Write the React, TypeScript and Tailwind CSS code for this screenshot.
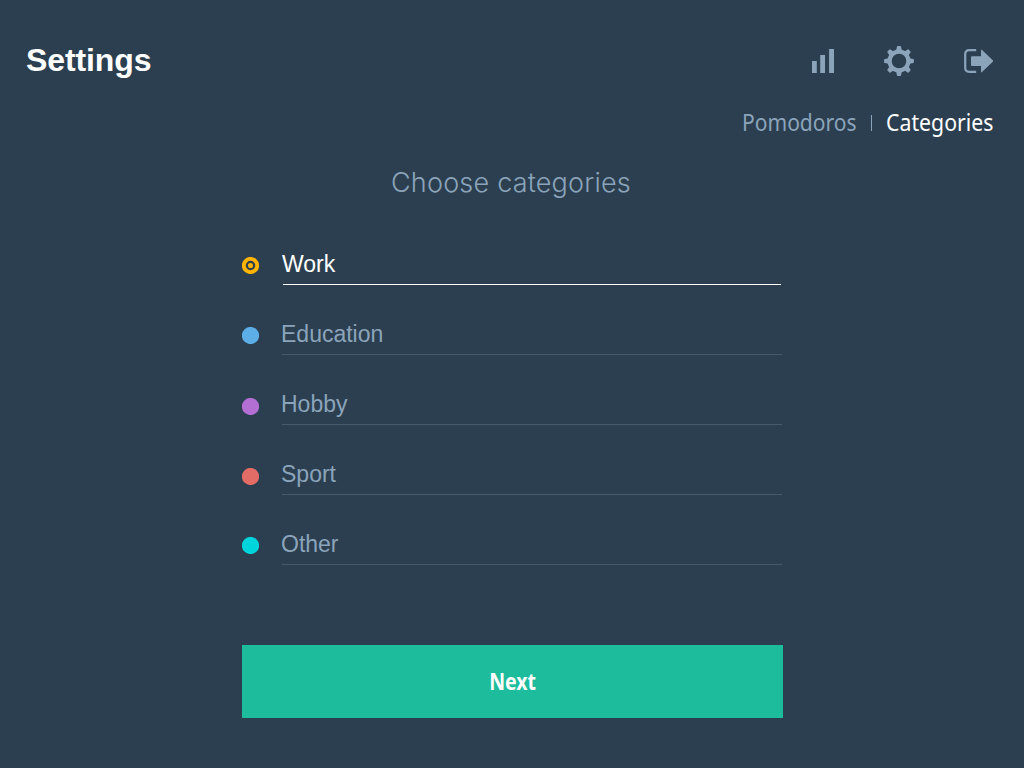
import React from "react";

type Category = { name: string; dot: string; offset: string; active?: boolean };

const categories: Category[] = [
  { name: "Work", dot: "text-[#ffb302]", offset: "mt-[12px]", active: true },
  { name: "Education", dot: "text-[#5dade6]", offset: "mt-[12px]" },
  { name: "Hobby", dot: "text-[#b36fd3]", offset: "mt-[13px]" },
  { name: "Sport", dot: "text-[#e46c67]", offset: "mt-[13px]" },
  { name: "Other", dot: "text-[#00d5dc]", offset: "mt-[12px]" },
];

function BarsIcon() {
  return (
    <svg width="22" height="24" viewBox="0 0 22 24" fill="currentColor">
      <path d="M0 12h4.8v12H0zM8.2 6H13v18H8.2zM17.1 0H22v24h-4.9z" />
    </svg>
  );
}

function GearIcon() {
  return (
    <svg width="30" height="30" viewBox="-15 -15 30 30" fill="currentColor">
      <circle r="9.3" fill="none" stroke="currentColor" strokeWidth="4" />
      {[0, 45, 90, 135, 180, 225, 270, 315].map((a) => (
        <path key={a} transform={`rotate(${a})`} d="M-2.1 -14.2Q-2 -14.9 -1.3 -14.9H1.3Q2 -14.9 2.1 -14.2L2.6 -11.5L4.4 -10.2V-9H-4.4V-10.2L-2.6 -11.5Z" />
      ))}
    </svg>
  );
}

function ExitIcon() {
  return (
    <svg width="30" height="24" viewBox="0 0 30 24">
      <path d="M12.2 1.2H5.2Q1.2 1.2 1.2 5.2V18.8Q1.2 22.8 5.2 22.8H12.2" fill="none" stroke="currentColor" strokeWidth="2.2" />
      <path d="M8 7.2H17V1.2Q17 0 18 .9L28.8 11.3Q29.5 12 28.8 12.7L18 23.1Q17 24 17 22.8V16.9H8Q7 16.9 7 15.9V8.2Q7 7.2 8 7.2Z" fill="currentColor" />
    </svg>
  );
}

export default function App() {
  return (
    <main className="flex h-[768px] w-[1024px] flex-col overflow-hidden bg-[#2c3f50] font-['Liberation_Sans',Arial,sans-serif] text-[#8ba4ba]">
      <header className="flex h-[60px] items-start justify-between pt-[42px] pr-[30px] pl-[26px]">
        <h1 className="text-[32px] leading-[36px] font-bold tracking-[-0.1px] text-white">Settings</h1>
        <nav className="flex h-[38px] items-center">
          <BarsIcon />
          <span className="mr-[50px] ml-[50px]">
            <GearIcon />
          </span>
          <ExitIcon />
        </nav>
      </header>
      <div className="mt-[46px] flex h-[34px] items-center justify-end pr-[30px] font-['Noto_Sans',sans-serif] text-[23px] leading-[34px]">
        <span className="-mt-[2px] w-[114px] origin-left scale-x-[0.915] whitespace-nowrap">Pomodoros</span>
        <span className="mr-[14px] ml-[15px] h-4 w-px bg-[#8ba4ba]" />
        <span className="-mt-[2px] w-[108px] origin-left scale-x-[0.925] whitespace-nowrap text-white">Categories</span>
      </div>
      <h2 className="mt-[25px] ml-[391px] h-[36px] font-['Inter',sans-serif] text-[27px] leading-[36px] font-light tracking-[0.2px] whitespace-nowrap">
        Choose categories
      </h2>
      <ul className="mt-[44px] ml-[242px] w-[540px]">
        {categories.map((c) => (
          <li key={c.name} className="flex h-[70px] items-start">
            <svg className={`${c.offset} ${c.dot} shrink-0`} width="17" height="17" viewBox="0 0 17 17">
              <circle cx="8.5" cy="8.5" r="8.6" fill="currentColor" />
              {c.active && <circle cx="8.5" cy="8.5" r="3.65" fill="none" stroke="#2c3f50" strokeWidth="2.2" />}
            </svg>
            <div
              className={
                c.active
                  ? "mr-px ml-[24px] h-[40px] flex-1 border-b border-white text-[23px] leading-[38px] text-white"
                  : "ml-[23px] h-[40px] flex-1 border-b border-[#455a6d] text-[23px] leading-[38px]"
              }
            >
              <span className="-ml-px">{c.name}</span>
            </div>
          </li>
        ))}
      </ul>
      <button className="mt-[50px] ml-[242px] h-[73px] w-[541px] bg-[#1dbc9c] font-['Noto_Sans',sans-serif] text-[23px] font-bold text-white">
        <span className="inline-block scale-x-[0.85]">Next</span>
      </button>
    </main>
  );
}
